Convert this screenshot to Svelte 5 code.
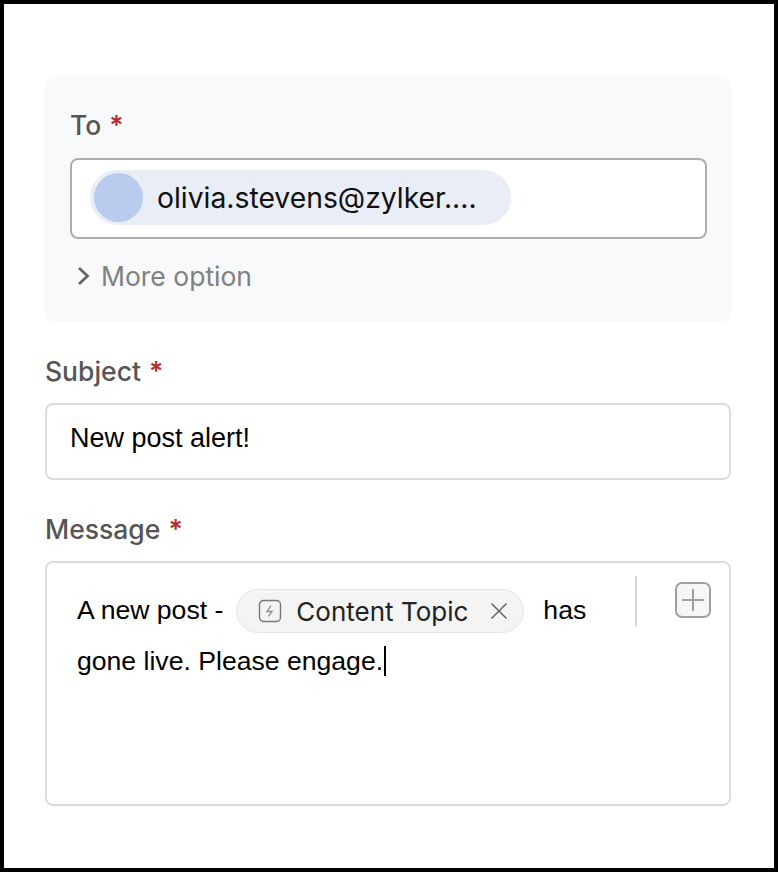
<script>
  const stars = '*';
</script>

<div class="frame">
  <section class="panel">
    <div class="label to">To <span class="star">{stars}</span></div>
    <div class="to-field">
      <div class="recipient">
        <span class="avatar"></span>
        <span class="email">olivia.stevens@zylker....</span>
      </div>
    </div>
    <div class="more">
      <svg width="16" height="22" viewBox="0 0 16 22" fill="none"><path d="M3 3 11.5 11 3 19" stroke="#666" stroke-width="2.8"/></svg>
      <span>More option</span>
    </div>
  </section>

  <div class="label subject">Subject <span class="star">{stars}</span></div>
  <div class="subject-field">New post alert!</div>

  <div class="label message">Message <span class="star">{stars}</span></div>
  <div class="message-field">
    <div class="body">
      <div class="line one">
        <span class="word">A new post -</span>
        <span class="token">
          <svg width="24" height="24" viewBox="0 0 24 24" fill="none">
            <rect x="1.5" y="1.5" width="21" height="21" rx="4" stroke="#777" stroke-width="1.4"/>
            <path d="M13 6.5 9 12.5h5l-3.5 5" stroke="#888" stroke-width="1.3"/>
          </svg>
          <span class="token-text">Content Topic</span>
          <svg class="x" width="18" height="18" viewBox="0 0 18 18" fill="none"><path d="M1.5 1.5l15 15M16.5 1.5l-15 15" stroke="#666" stroke-width="1.5"/></svg>
        </span>
        <span class="word">has</span>
      </div>
      <div class="line two">gone live. Please engage.<span class="caret"></span></div>
    </div>
    <div class="tools">
      <span class="divider"></span>
      <span class="plus">
        <svg width="22" height="22" viewBox="0 0 22 22" fill="none"><path d="M11 0v22M0 11h22" stroke="#a0a0a0" stroke-width="2"/></svg>
      </span>
    </div>
  </div>
</div>

<style>
  :global(body) { margin: 0; background: #fff; }
  .frame {
    box-sizing: border-box;
    width: 778px;
    height: 872px;
    border: 4px solid #000;
    padding: 73px 43px 0 41px;
    font-family: "Liberation Sans", Arial, sans-serif;
    background: #fff;
  }
  .panel {
    box-sizing: border-box;
    height: 245px;
    background: #f8f9fb;
    border-radius: 9px;
    padding: 31px 25px 0;
  }
  .label {
    font-family: Inter, "Liberation Sans", sans-serif;
    font-weight: 500;
    font-size: 26.5px;
    line-height: 34px;
    color: #555;
  }
  .star { color: #b52a2a; margin-left: 1px; font-weight: 600; }
  .to-field {
    box-sizing: border-box;
    width: 637px;
    height: 81px;
    margin-top: 16px;
    background: #fff;
    border: 2px solid #adadad;
    border-radius: 8px;
    padding: 10px 18px;
  }
  .recipient {
    display: flex;
    align-items: center;
    width: 421px;
    height: 55px;
    background: #e9edf6;
    border-radius: 28px;
    box-sizing: border-box;
    padding-left: 4px;
  }
  .avatar {
    width: 49px;
    height: 49px;
    border-radius: 50%;
    background: #b9cced;
    flex: none;
  }
  .email {
    margin-left: 14px;
    font-family: Inter, sans-serif;
    font-size: 28.3px;
    color: #111;
  }
  .more {
    display: flex;
    align-items: center;
    gap: 9px;
    margin: 20px 0 0 6px;
    font-family: Inter, sans-serif;
    font-size: 26.5px;
    line-height: 34px;
    color: #808080;
  }
  .subject { margin-top: 32px; }
  .subject-field {
    box-sizing: border-box;
    height: 77px;
    margin-top: 15px;
    border: 2px solid #dcdcdc;
    border-radius: 8px;
    padding: 16px 23px;
    font-size: 27px;
    line-height: 34px;
    color: #000;
  }
  .message { margin-top: 32px; }
  .message-field {
    box-sizing: border-box;
    height: 245px;
    margin-top: 15px;
    border: 2px solid #dcdcdc;
    border-radius: 8px;
    display: flex;
    padding: 13px 18px 0 30px;
    font-size: 26.6px;
    color: #000;
  }
  .body { width: 558px; flex: none; }
  .line { display: flex; align-items: center; }
  .one { gap: 13px; height: 44px; margin-top: 13px; }
  .word { padding-bottom: 2px; }
  .two { height: 34px; margin-top: 11px; line-height: 34px; }
  .token {
    box-sizing: border-box;
    display: flex;
    align-items: center;
    flex: none;
    width: 288px;
    height: 44px;
    margin-right: 6px;
    padding: 0 15px 0 21px;
    background: #f4f4f4;
    border: 1.5px solid #e4e4e4;
    border-radius: 22px;
  }
  .token-text {
    margin-left: 14px;
    font-family: Inter, sans-serif;
    font-size: 26px;
    color: #222;
  }
  .x { margin-left: auto; }
  .caret {
    display: inline-block;
    width: 1.5px;
    height: 30px;
    background: #000;
    margin-left: 1px;
  }
  .tools { display: flex; align-items: flex-start; }
  .divider {
    width: 2px;
    height: 50px;
    background: #d4d4d4;
  }
  .plus {
    box-sizing: border-box;
    display: flex;
    align-items: center;
    justify-content: center;
    width: 36px;
    height: 36px;
    margin: 6px 0 0 38px;
    border: 2px solid #a0a0a0;
    border-radius: 7px;
    background: #f6f6f6;
  }
</style>
